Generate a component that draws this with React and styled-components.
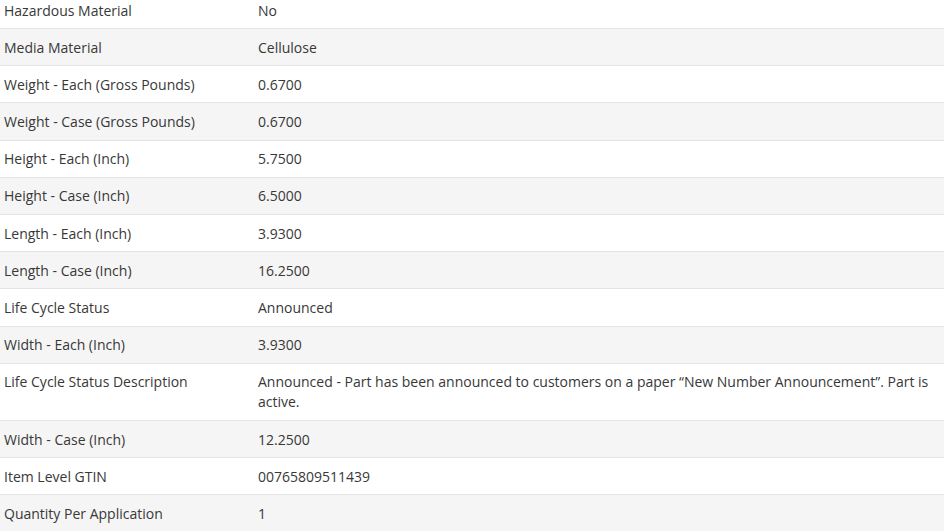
import styled, { createGlobalStyle } from "styled-components";

const GlobalStyle = createGlobalStyle`
    html, body {
        margin: 0;
        padding: 0;
        background: #fff;
        overflow: hidden;
    }
`;

const rows = [
    ["Hazardous Material", "No"],
    ["Media Material", "Cellulose"],
    ["Weight - Each (Gross Pounds)", "0.6700"],
    ["Weight - Case (Gross Pounds)", "0.6700"],
    ["Height - Each (Inch)", "5.7500"],
    ["Height - Case (Inch)", "6.5000"],
    ["Length - Each (Inch)", "3.9300"],
    ["Length - Case (Inch)", "16.2500"],
    ["Life Cycle Status", "Announced"],
    ["Width - Each (Inch)", "3.9300"],
    [
        "Life Cycle Status Description",
        "Announced - Part has been announced to customers on a paper \u201cNew Number Announcement\u201d. Part is active.",
    ],
    ["Width - Case (Inch)", "12.2500"],
    ["Item Level GTIN", "00765809511439"],
    ["Quantity Per Application", "1"],
];

const App = () => {
    return (
        <>
            <GlobalStyle />
            <Table>
                <tbody>
                    {rows.map(([label, value], i) => (
                        <Row key={label} $striped={i % 2 === 1}>
                            <Label>{label}</Label>
                            <Value>{value}</Value>
                        </Row>
                    ))}
                </tbody>
            </Table>
        </>
    );
};

export default App;

const Table = styled.table`
    width: 944px;
    margin-top: -9.2px;
    border-collapse: collapse;
    table-layout: fixed;
    font-family: "Open Sans", "Liberation Sans", sans-serif;
    font-size: 14px;
    line-height: 20px;
    color: #383838;
`;

const Row = styled.tr`
    background: ${(p) => (p.$striped ? "#f5f5f5" : "#ffffff")};
    border-top: 1px solid #e3e3e3;
`;

const Label = styled.td`
    width: 250px;
    padding: 8.7px 0 7.5px 4px;
    vertical-align: top;
`;

const Value = styled.td`
    padding: 8.7px 4px 7.5px;
    vertical-align: top;
`;
